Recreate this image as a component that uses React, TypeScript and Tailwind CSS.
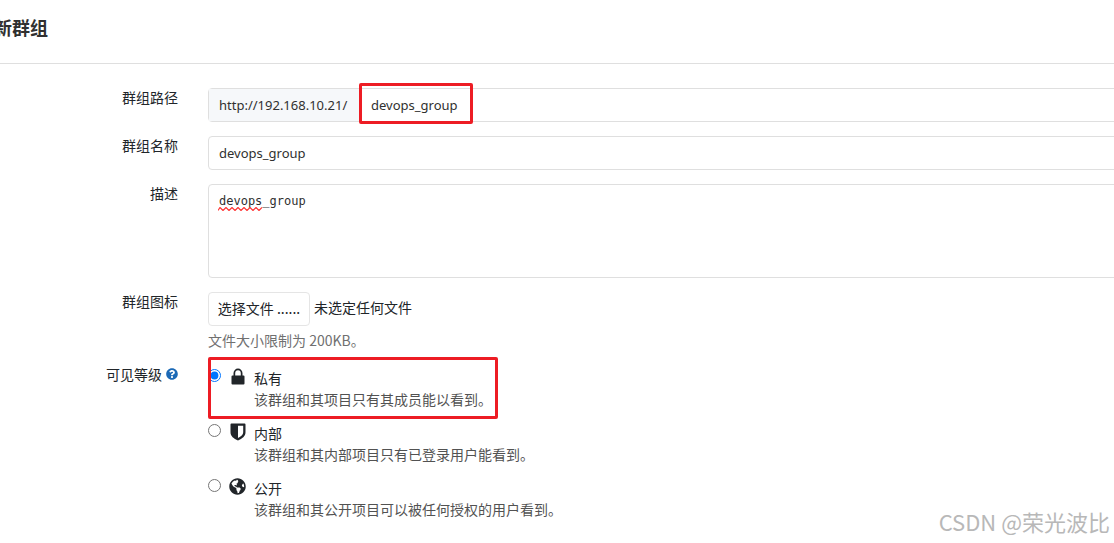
import React, { useState } from 'react'
import type { ReactNode } from 'react'
import { FaGlobeAmericas, FaQuestionCircle } from 'react-icons/fa'

type typeRow = {
   label: ReactNode,
   htmlFor?: string,
   children: ReactNode
}

const LockIcon = () => (
   <svg viewBox="0 0 14 17" className="w-[14px] h-[17px]" fill="currentColor">
      <path fillRule="evenodd" d="M2.500 7.500V5.300a4.500 4.800 0 0 1 9 0v2.200h1a1 1 0 0 1 1 1v7a1 1 0 0 1-1 1h-11a1 1 0 0 1-1-1v-7a1 1 0 0 1 1-1zM4.200 7.500h5.600V5.300a2.800 3 0 0 0-5.600 0z" />
   </svg>
)

const ShieldIcon = () => (
   <svg viewBox="0 0 16 18" className="w-4 h-[18px]" fill="currentColor">
      <path fillRule="evenodd" d="M1.400.5h13.200a.9.9 0 0 1 .9.9v7.800c0 4-3.200 6.300-7.500 8.300C3.700 15.500.5 13.200.5 9.200V1.400a.9.9 0 0 1 .9-.9zM8 2.700v12.300c3-1.600 5.200-3.300 5.200-5.800V2.700z" />
   </svg>
)

const levels = [
   { id: 'private', name: '私有', detail: '该群组和其项目只有其成员能以看到。', icon: <LockIcon /> },
   { id: 'internal', name: '内部', detail: '该群组和其内部项目只有已登录用户能看到。', icon: <ShieldIcon /> },
   { id: 'public', name: '公开', detail: '该群组和其公开项目可以被任何授权的用户看到。', icon: <FaGlobeAmericas className="w-[17px] h-[17px]" /> },
]

const Row = ({label, htmlFor, children}: typeRow) => (
   <div className="flex gap-[30px]">
      <label htmlFor={htmlFor} className="w-[178px] shrink-0 flex justify-end items-center gap-1 h-[18px] text-sm">{label}</label>
      <div className="flex-1 min-w-0">{children}</div>
   </div>
)

const App = () => {
   const [path, setPath] = useState('devops_group')
   const [name, setName] = useState('devops_group')
   const [description, setDescription] = useState('devops_group')
   const [level, setLevel] = useState('private')

   return (
      <div className="relative min-h-screen overflow-hidden bg-white text-[#212529] font-['Noto_Sans','Noto_Sans_CJK_SC',sans-serif]">
         {/* title */}
         <header className="h-16 pt-4 border-b border-[#dfdfdf]">
            <h1 className="-ml-1.5 text-lg leading-[22px] font-bold text-[#303030] font-['Noto_Sans_CJK_SC',sans-serif]">新群组</h1>
         </header>

         <form className="-mr-4 pt-6 flex flex-col gap-[14px] font-['Noto_Sans_CJK_SC',sans-serif]">
            <Row label="群组路径" htmlFor="path">
               <div className="flex h-[34px] text-[13px] text-[#303030] font-['Noto_Sans',sans-serif] border border-[#dfdfdf] rounded-sm">
                  <span className="w-[153px] px-[10px] leading-8 bg-[#f6f8fa] border-r border-[#dfdfdf]">http://192.168.10.21/</span>
                  <div className="relative flex-1">
                     <input id="path" type="text" value={path} onChange={e => setPath(e.target.value)} className="w-full h-8 px-[9px] outline-none" />
                     <div className="absolute -left-[3px] -top-[6px] w-[114px] h-[41px] border-[3px] border-[#ed1c24] rounded-xs pointer-events-none"></div>
                  </div>
               </div>
            </Row>

            <Row label="群组名称" htmlFor="name">
               <input id="name" type="text" value={name} onChange={e => setName(e.target.value)} className="block w-full h-[34px] px-[10px] text-[13px] text-[#303030] font-['Noto_Sans',sans-serif] border border-[#dfdfdf] rounded-sm outline-none" />
            </Row>

            <Row label="描述" htmlFor="description">
               <div className="relative">
                  <textarea id="description" spellCheck={false} value={description} onChange={e => setDescription(e.target.value)} className="block w-full h-[94px] px-[10px] py-2 resize-none text-[12px] leading-4 text-[#303030] font-['DejaVu_Sans_Mono',monospace] border border-[#dfdfdf] rounded-sm outline-none" />
                  {/* spelling mark */}
                  <svg viewBox="0 0 44 4" className="absolute left-[10px] top-[23px] w-11 h-1" fill="none" stroke="#f33" strokeWidth="1.200">
                     <path d="M0 3.500l2-3 3 3 3-3 3 3 3-3 3 3 3-3 3 3 3-3 3 3 3-3 3 3 3-3 3 3 3-3" />
                  </svg>
               </div>
            </Row>

            <Row label="群组图标" htmlFor="avatar">
               <div className="flex gap-1 text-sm leading-[30px]">
                  <label htmlFor="avatar" className="w-[102px] h-[34px] text-center whitespace-nowrap border border-[#e5e5e5] rounded-sm">选择文件 ......</label>
                  <input id="avatar" type="file" className="sr-only" />
                  <span>未选定任何文件</span>
               </div>
               <p className="pt-1 pb-px text-sm leading-5 text-[#707070]">文件大小限制为 200KB。</p>
            </Row>

            {/* visibility */}
            <Row label={<>可见等级 <FaQuestionCircle className="w-3 h-3 text-[#1b69b6]" /></>}>
               <div className="relative flex flex-col gap-[13px] pt-[3px]">
                  {
                     levels.map(data => (
                        <div key={data.id} className="flex">
                           <input id={data.id} type="radio" name="level" checked={level === data.id} onChange={() => setLevel(data.id)} className="w-[13px] h-[13px] mt-px" />
                           <label htmlFor={data.id} className="flex text-sm">
                              <span className="w-[33px] h-[17px] flex items-center justify-center">{data.icon}</span>
                              <span>
                                 <span className="block leading-[21px]">{data.name}</span>
                                 <span className="block leading-[21px] text-[#525252]">{data.detail}</span>
                              </span>
                           </label>
                        </div>
                     ))
                  }
                  <div className="absolute left-0 -top-2 w-[290px] h-[62px] border-[3px] border-[#ed1c24] rounded-xs pointer-events-none"></div>
               </div>
            </Row>
         </form>

         <div className="absolute right-1 bottom-1.5 text-[22px] leading-8 text-[#b8b8b8] font-['Noto_Sans_CJK_SC',sans-serif]">CSDN @荣光波比</div>
      </div>
   )
}

export default App
